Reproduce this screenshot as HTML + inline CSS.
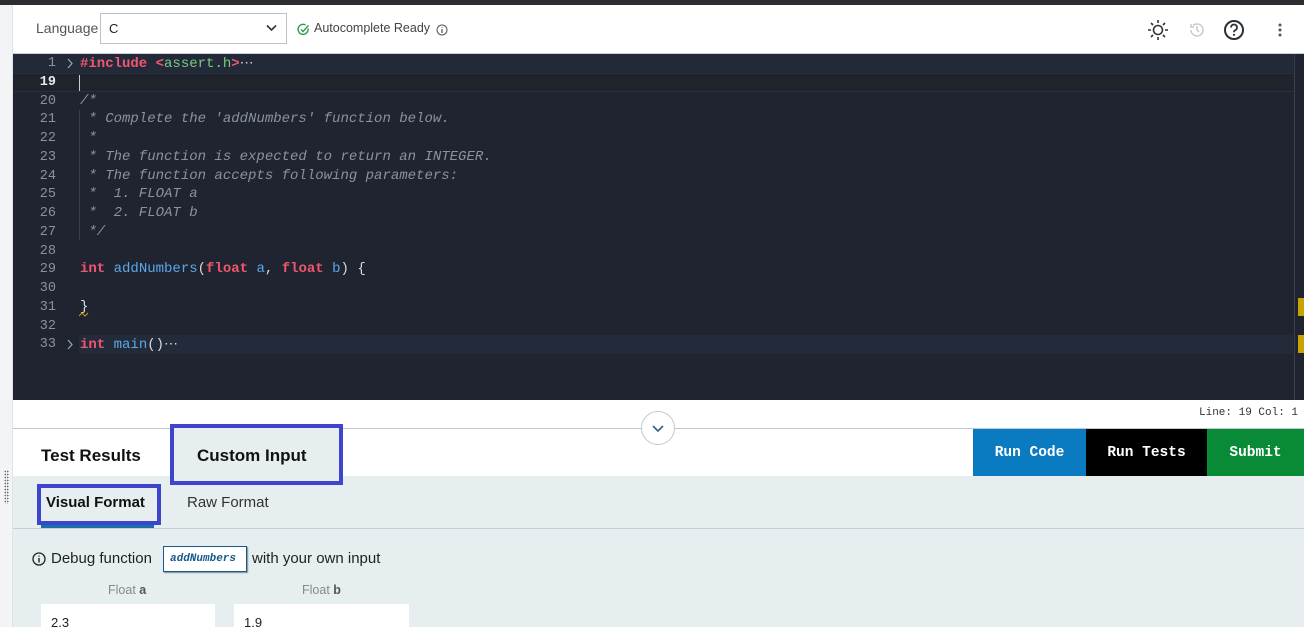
<!DOCTYPE html>
<html><head><style>
*{margin:0;padding:0;box-sizing:border-box}
body{width:1304px;height:627px;overflow:hidden;background:#fff;font-family:"Liberation Sans",sans-serif;position:relative}
.a{position:absolute}
.code{font-family:"Liberation Mono",monospace;font-size:14px;white-space:pre}
.ln{position:absolute;left:13px;width:43px;text-align:right;color:#8a919c;font-family:"Liberation Mono",monospace;font-size:13.5px}
.k{color:#f1566f;font-weight:bold}
.f{color:#5ca8e8}
.s{color:#7ccb7e}
.c{color:#8a929d;font-style:italic}
.p{color:#d7dae0}
.btn{position:absolute;top:429px;height:47px;color:#fff;font-family:"Liberation Mono",monospace;font-weight:bold;font-size:14.5px;display:flex;align-items:center;justify-content:center}
</style></head><body>
<div class="a" style="left:0;top:0;width:1304px;height:5px;background:#2b2d31"></div>
<div class="a" style="left:0;top:5px;width:13px;height:622px;background:#f2f4f5;border-right:1px solid #dde3e6"></div>
<div class="a" style="left:36px;top:20px;font-size:14px;color:#555">Language</div>
<div class="a" style="left:100px;top:13px;width:187px;height:31px;border:1px solid #b9c4ca;background:#fff"></div>
<div class="a" style="left:109px;top:21px;font-size:13px;color:#222">C</div>
<svg class="a" style="left:266px;top:24px" width="11" height="8"><path d="M1 1.5L5.5 6L10 1.5" stroke="#333" stroke-width="1.6" fill="none"/></svg>
<svg class="a" style="left:297px;top:23px" width="13" height="13"><path d="M11 5.5A5 5 0 1 1 8.5 2" stroke="#2a9d48" stroke-width="1.4" fill="none"/><path d="M4 6.5L6 8.5L11.5 2.5" stroke="#2a9d48" stroke-width="1.4" fill="none"/></svg>
<div class="a" style="left:314px;top:21px;font-size:12.5px;color:#444">Autocomplete Ready</div>
<svg class="a" style="left:436px;top:24px" width="12" height="12"><circle cx="6" cy="6" r="5" stroke="#555" fill="none"/><path d="M6 5v4M6 3.2v.8" stroke="#555" stroke-width="1.2"/></svg>
<svg class="a" style="left:1147px;top:19px" width="22" height="22"><circle cx="11" cy="11" r="4.5" stroke="#333" stroke-width="1.6" fill="none"/><g stroke="#333" stroke-width="1.6"><path d="M11 1v3M11 18v3M1 11h3M18 11h3M4 4l2 2M16 16l2 2M4 18l2-2M16 6l2-2"/></g></svg>
<svg class="a" style="left:1188px;top:21px" width="18" height="18"><path d="M3 9a6 6 0 1 0 2-4.5" stroke="#c3ccd0" stroke-width="1.5" fill="none"/><path d="M3 3v3h3M9 5v4l2 2" stroke="#c3ccd0" stroke-width="1.5" fill="none"/></svg>
<svg class="a" style="left:1223px;top:19px" width="22" height="22"><circle cx="11" cy="11" r="9" stroke="#2a2f36" stroke-width="2" fill="none"/><path d="M8 8.5a3 3 0 1 1 4 2.8c-.8.4-1 1-1 2" stroke="#2a2f36" stroke-width="1.8" fill="none"/><circle cx="11" cy="15.8" r="1.1" fill="#2a2f36"/></svg>
<svg class="a" style="left:1277px;top:22px" width="6" height="16"><circle cx="3" cy="3" r="1.5" fill="#555"/><circle cx="3" cy="8" r="1.5" fill="#555"/><circle cx="3" cy="13" r="1.5" fill="#555"/></svg>

<div class="a" style="left:13px;top:53px;width:1291px;height:347px;background:#1f2430;border-top:1px solid #ccd"></div>
<div class="a" style="left:13px;top:54px;width:1280px;height:19px;background:#222a3a"></div>
<div class="a" style="left:13px;top:73px;width:1280px;height:19px;border-top:1px solid #2a303b;border-bottom:1px solid #2a303b;background:#1e232c"></div>
<div class="a" style="left:79px;top:335px;width:1214px;height:19px;background:#232b3b"></div>
<div class="a" style="left:1294px;top:54px;width:1px;height:346px;background:#3a404b"></div>
<div class="a" style="left:1298px;top:298px;width:6px;height:18px;background:#c9a400"></div>
<div class="a" style="left:1298px;top:335px;width:6px;height:18px;background:#c9a400"></div>
<div class="a" style="left:79px;top:75px;width:1px;height:16px;background:#ccc"></div>
<div class="a" style="left:79px;top:110px;width:1px;height:130px;background:#3a404b"></div>

<div class="ln" style="top:56px">1</div>
<div class="ln" style="top:75px;color:#e6e8ea;font-weight:bold">19</div>
<div class="ln" style="top:94px">20</div>
<div class="ln" style="top:112px">21</div>
<div class="ln" style="top:131px">22</div>
<div class="ln" style="top:150px">23</div>
<div class="ln" style="top:169px">24</div>
<div class="ln" style="top:187px">25</div>
<div class="ln" style="top:206px">26</div>
<div class="ln" style="top:225px">27</div>
<div class="ln" style="top:244px">28</div>
<div class="ln" style="top:262px">29</div>
<div class="ln" style="top:281px">30</div>
<div class="ln" style="top:300px">31</div>
<div class="ln" style="top:319px">32</div>
<div class="ln" style="top:337px">33</div>
<svg class="a" style="left:66px;top:58px" width="8" height="11"><path d="M2 1l4 4.5L2 10" stroke="#9aa" stroke-width="1.2" fill="none"/></svg>
<svg class="a" style="left:66px;top:339px" width="8" height="11"><path d="M2 1l4 4.5L2 10" stroke="#9aa" stroke-width="1.2" fill="none"/></svg>

<div class="a code" style="left:80px;top:55px"><span class="k">#include</span> <span class="k">&lt;</span><span class="s">assert.h</span><span class="k">&gt;</span><span class="p">⋯</span></div>
<div class="a code c" style="left:80px;top:93px">/*</div>
<div class="a code c" style="left:80px;top:111px"> * Complete the 'addNumbers' function below.</div>
<div class="a code c" style="left:80px;top:130px"> *</div>
<div class="a code c" style="left:80px;top:149px"> * The function is expected to return an INTEGER.</div>
<div class="a code c" style="left:80px;top:168px"> * The function accepts following parameters:</div>
<div class="a code c" style="left:80px;top:186px"> *  1. FLOAT a</div>
<div class="a code c" style="left:80px;top:205px"> *  2. FLOAT b</div>
<div class="a code c" style="left:80px;top:224px"> */</div>
<div class="a code" style="left:80px;top:261px"><span class="k">int</span> <span class="f">addNumbers</span><span class="p">(</span><span class="k">float</span> <span class="f">a</span><span class="p">,</span> <span class="k">float</span> <span class="f">b</span><span class="p">) {</span></div>
<div class="a code p" style="left:80px;top:299px">}</div>
<svg class="a" style="left:79px;top:312px" width="10" height="5"><path d="M0 4L3 1L6 4L9 1" stroke="#c9a400" fill="none"/></svg>
<div class="a code" style="left:80px;top:336px"><span class="k">int</span> <span class="f">main</span><span class="p">()⋯</span></div>

<div class="a" style="left:1199px;top:407px;font-family:'Liberation Mono',monospace;font-size:11px;color:#333">Line: 19 Col: 1</div>
<div class="a" style="left:13px;top:428px;width:1291px;height:1px;background:#bfcacf"></div>
<div class="a" style="left:641px;top:411px;width:34px;height:34px;border-radius:50%;border:1px solid #bfcacf;background:#fff"></div>
<svg class="a" style="left:651px;top:424px" width="14" height="9"><path d="M2 2l5 5 5-5" stroke="#2d5f8a" stroke-width="1.6" fill="none"/></svg>

<div class="a" style="left:13px;top:476px;width:1291px;height:151px;background:#e7eef0"></div>
<div class="a" style="left:41px;top:446px;font-size:17px;font-weight:bold;color:#111">Test Results</div>
<div class="a" style="left:170px;top:424px;width:173px;height:61px;border:4px solid #3c45cc;background:#e7eef0"></div>
<div class="a" style="left:197px;top:446px;font-size:17px;font-weight:bold;color:#111">Custom Input</div>
<div class="btn" style="left:973px;width:113px;background:#0a7bc0">Run Code</div>
<div class="btn" style="left:1086px;width:121px;background:#000">Run Tests</div>
<div class="btn" style="left:1207px;width:97px;background:#088a36">Submit</div>

<div class="a" style="left:13px;top:528px;width:1291px;height:1px;background:#c5d0d5"></div>
<div class="a" style="left:41px;top:524px;width:113px;height:4px;background:#1a6fa8"></div>
<div class="a" style="left:37px;top:484px;width:124px;height:41px;border:4px solid #3c45cc"></div>
<div class="a" style="left:46px;top:494px;font-size:15px;font-weight:bold;color:#111">Visual Format</div>
<div class="a" style="left:187px;top:494px;font-size:15px;color:#333">Raw Format</div>

<svg class="a" style="left:32px;top:552px" width="14" height="14"><circle cx="7" cy="7" r="6" stroke="#222" stroke-width="1.3" fill="none"/><path d="M7 6v4.5M7 3.6v1" stroke="#222" stroke-width="1.4"/></svg>
<div class="a" style="left:51px;top:550px;font-size:15px;color:#222">Debug function</div>
<div class="a" style="left:163px;top:546px;width:84px;height:26px;border:1px solid #155a8a;background:#fff;box-shadow:1px 1px 1px #7a8a95;font-family:'Liberation Mono',monospace;font-size:11px;font-style:italic;font-weight:bold;color:#155a8a;padding:6px 0 0 6px">addNumbers</div>
<div class="a" style="left:252px;top:550px;font-size:15px;color:#222">with your own input</div>
<div class="a" style="left:108px;top:583px;font-size:12.5px;color:#888">Float <b style="color:#555">a</b></div>
<div class="a" style="left:302px;top:583px;font-size:12.5px;color:#888">Float <b style="color:#555">b</b></div>
<div class="a" style="left:41px;top:604px;width:174px;height:30px;background:#fff"></div>
<div class="a" style="left:234px;top:604px;width:175px;height:30px;background:#fff"></div>
<div class="a" style="left:51px;top:615px;font-size:13px;color:#222">2.3</div>
<div class="a" style="left:244px;top:615px;font-size:13px;color:#222">1.9</div>
<div class="a" style="left:4px;top:470px;width:5px;height:34px;background-image:radial-gradient(#666 40%,transparent 45%);background-size:2.5px 3px"></div>
</body></html>
